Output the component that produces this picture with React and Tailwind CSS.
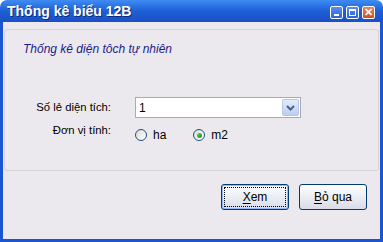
import { useState } from 'react';

const Radio = ({ checked, label, onClick }) => (
  <button onClick={onClick} className="flex items-center gap-[6px]">
    <span className="flex w-[12px] h-[12px] items-center justify-center rounded-full border border-[#1c5180] bg-gradient-to-br from-[#dcdad5] to-[#ffffff]">
      {checked && (
        <span className="w-[5px] h-[5px] rounded-full bg-gradient-to-br from-[#55d451] to-[#1f8a1c]" />
      )}
    </span>
    <span className="text-[12px] text-black">{label}</span>
  </button>
);

const TitleBtn = ({ children, close }) => (
  <div
    className={
      'flex w-[13px] h-[13px] items-center justify-center rounded-[2px] border border-white ' +
      (close ? 'bg-gradient-to-b from-[#e9825e] to-[#cf4a1f]' : 'bg-gradient-to-b from-[#5a8df0] to-[#2a63d8]')
    }
  >
    {children}
  </div>
);

export default function App() {
  const [unit, setUnit] = useState('m2');

  return (
    <div className="w-[383px] h-[242px] flex flex-col font-['Liberation_Sans',Arial,sans-serif] select-none">
      {/* thanh tiêu đề */}
      <div className="h-[22px] flex items-center pl-[7px] pr-[8px] rounded-t-[7px] bg-gradient-to-b from-[#3f8cf3] via-[#1f5fd6] to-[#1b4fc4]">
        <span className="flex-1 text-white font-bold text-[14px] [text-shadow:1px_1px_#0b2a7a]">
          Thống kê biểu 12B
        </span>
        <div className="flex gap-[3px] pt-[2px]">
          <TitleBtn>
            <span className="mt-[6px] w-[5px] h-[2px] bg-white" />
          </TitleBtn>
          <TitleBtn>
            <span className="w-[7px] h-[7px] border border-white border-t-2" />
          </TitleBtn>
          <TitleBtn close>
            <span className="text-white text-[11px] font-bold leading-none">✕</span>
          </TitleBtn>
        </div>
      </div>

      {/* nội dung */}
      <div className="flex-1 flex flex-col bg-[#ece9ee] border-x-[3px] border-b-[3px] border-[#1c55d2] pt-[7px] px-[1px]">
        <div className="h-[142px] border border-[#d4d2d6] rounded-[3px] pl-[18px] pt-[10px]">
          <p className="italic text-[12px] text-[#1b1b8a]">Thống kê diện tôch tự nhiên</p>

          <div className="grid grid-cols-[88px_1fr] gap-x-[24px] mt-[39px] items-center">
            <span className="text-right text-[11.3px] text-black">Số lẻ diện tích:</span>
            <div className="w-[166px] h-[21px] flex items-center border border-[#a5acb5] bg-white">
              <span className="flex-1 pl-[3px] text-[12px] text-black">1</span>
              <div className="w-[17px] h-[17px] mr-[1px] flex items-center justify-center rounded-[2px] border border-[#b9c7e6] bg-gradient-to-b from-[#e3ebfb] to-[#bccdf1]">
                <svg width="9" height="6" viewBox="0 0 9 6">
                  <path d="M1 1 L4.5 4.5 L8 1" fill="none" stroke="#4d6185" strokeWidth="2" />
                </svg>
              </div>
            </div>

            <span className="text-right text-[11.3px] text-black mt-[4px] self-start">Đơn vị tính:</span>
            <div className="flex gap-[27px] mt-[8px]">
              <Radio label="ha" checked={unit === 'ha'} onClick={() => setUnit('ha')} />
              <Radio label="m2" checked={unit === 'm2'} onClick={() => setUnit('m2')} />
            </div>
          </div>
        </div>

        {/* nút */}
        <div className="flex justify-end gap-[10px] mt-[13px] pr-[12px]">
          <button className="w-[68px] h-[26px] p-[2px] rounded-[3px] border border-[#003c74] bg-gradient-to-b from-[#ffffff] to-[#d8dce8] shadow-[inset_0_0_0_1px_#97b7f0]">
            <span className="flex h-full items-center justify-center border border-dotted border-black text-[12px] text-black">
              <span className="underline underline-offset-2">X</span>em
            </span>
          </button>
          <button className="w-[68px] h-[26px] rounded-[3px] border border-[#003c74] bg-gradient-to-b from-[#ffffff] to-[#d8dce8] text-[12px] text-black">
            <span className="underline underline-offset-2">B</span>ỏ qua
          </button>
        </div>
      </div>
    </div>
  );
}
